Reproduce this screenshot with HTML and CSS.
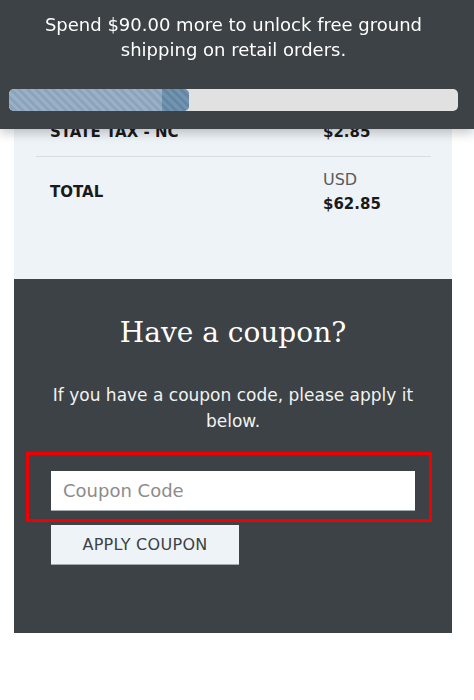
FILE: index.html
```html
<!DOCTYPE html>
<html>
<head>
<meta charset="utf-8">
<link rel="stylesheet" href="styles.css">
</head>
<body>
<div class="banner">
  <p class="banner-text">Spend $90.00 more to unlock free ground shipping on retail orders.</p>
  <div class="progress">
    <div class="progress-fill" style="width: 40%;"><span class="progress-tip"></span></div>
  </div>
</div>

<main class="page">
  <section class="summary">
    <div class="row row-line">
      <div class="label">STATE TAX - NC</div>
      <div class="value"><span class="amount">$2.85</span></div>
    </div>
    <div class="row">
      <div class="label">TOTAL</div>
      <div class="value">
        <span class="currency">USD</span>
        <span class="amount">$62.85</span>
      </div>
    </div>
  </section>

  <section class="coupon">
    <h2 class="coupon-title">Have a coupon?</h2>
    <p class="coupon-text">If you have a coupon code, please apply it below.</p>
    <div class="highlight">
      <input class="coupon-input" type="text" placeholder="Coupon Code">
    </div>
    <button class="coupon-btn" type="button">APPLY COUPON</button>
  </section>
</main>
</body>
</html>
```

FILE: styles.css
```css
* { box-sizing: border-box; }

html, body {
  margin: 0;
  padding: 0;
  background: #ffffff;
  font-family: "DejaVu Sans", "Liberation Sans", sans-serif;
}

.banner {
  position: fixed;
  top: 0;
  left: 0;
  right: 0;
  z-index: 10;
  background: #3c4245;
  padding: 13px 16px 18px 9px;
  box-shadow: 0 4px 10px rgba(0, 0, 0, 0.22);
}

.banner-text {
  margin: 0 0 27px;
  color: #ffffff;
  font-size: 18px;
  line-height: 24.5px;
  text-align: center;
}

.progress {
  height: 22px;
  border-radius: 5px;
  background: #e1e1e1;
  overflow: hidden;
}

.progress-fill {
  position: relative;
  height: 100%;
  border-radius: 5px;
  background: repeating-linear-gradient(45deg, #9ab0c6 0 3px, #8ba4bc 3px 6px);
}

.progress-tip {
  position: absolute;
  top: 0;
  right: 0;
  bottom: 0;
  width: 27px;
  border-radius: 0 5px 5px 0;
  background: repeating-linear-gradient(45deg, #7394b1 0 3px, #6486a5 3px 6px);
}

.page {
  margin: 0 22px 0 14px;
}

.summary {
  background: #eef3f8;
  padding: 108px 21px 51px 22px;
}

.row {
  display: grid;
  grid-template-columns: 1fr 108px;
  align-items: center;
  padding: 12px 0 12px 14px;
  color: #1a1a1a;
}

.row + .row {
  padding-top: 11px;
}

.row-line {
  border-bottom: 1px solid #d8dde2;
}

.label {
  font-size: 15px;
  font-weight: bold;
  line-height: 24px;
}

.value {
  display: flex;
  flex-direction: column;
}

.currency {
  font-size: 16px;
  line-height: 24px;
  color: #5a5a5a;
}

.amount {
  font-size: 15px;
  font-weight: bold;
  line-height: 24px;
}

.coupon {
  background: #3c4245;
  padding: 36px 37px 68px;
  color: #ffffff;
}

.coupon-title {
  margin: 0 0 32px;
  font-family: "DejaVu Serif", "Liberation Serif", serif;
  font-weight: normal;
  font-size: 28px;
  line-height: 36px;
  text-align: center;
}

.coupon-text {
  margin: 0 0 18px;
  font-size: 17px;
  line-height: 25.5px;
  text-align: center;
  color: #f2f2f2;
}

.highlight {
  margin: 0 -17px 0 -25px;
  padding: 16px 14px 8px 22px;
  border: 3px solid #f00000;
}

.coupon-input {
  display: block;
  width: 100%;
  height: 40px;
  margin: 0;
  padding: 0 12px;
  border: 0;
  border-bottom: 1px solid #a4a9ad;
  border-radius: 0;
  background: #ffffff;
  font-family: "DejaVu Sans", "Liberation Sans", sans-serif;
  font-size: 18px;
  color: #333333;
  outline: none;
}

.coupon-input::placeholder {
  color: #8e8b88;
}

.coupon-btn {
  display: block;
  width: 188px;
  height: 40px;
  margin: 3px 0 0;
  padding: 0;
  border: 0;
  border-bottom: 1px solid #a4a9ad;
  border-radius: 0;
  background: #eef3f8;
  color: #3c4245;
  font-family: "DejaVu Sans", "Liberation Sans", sans-serif;
  font-size: 16px;
  letter-spacing: 0.3px;
  cursor: pointer;
}
```
